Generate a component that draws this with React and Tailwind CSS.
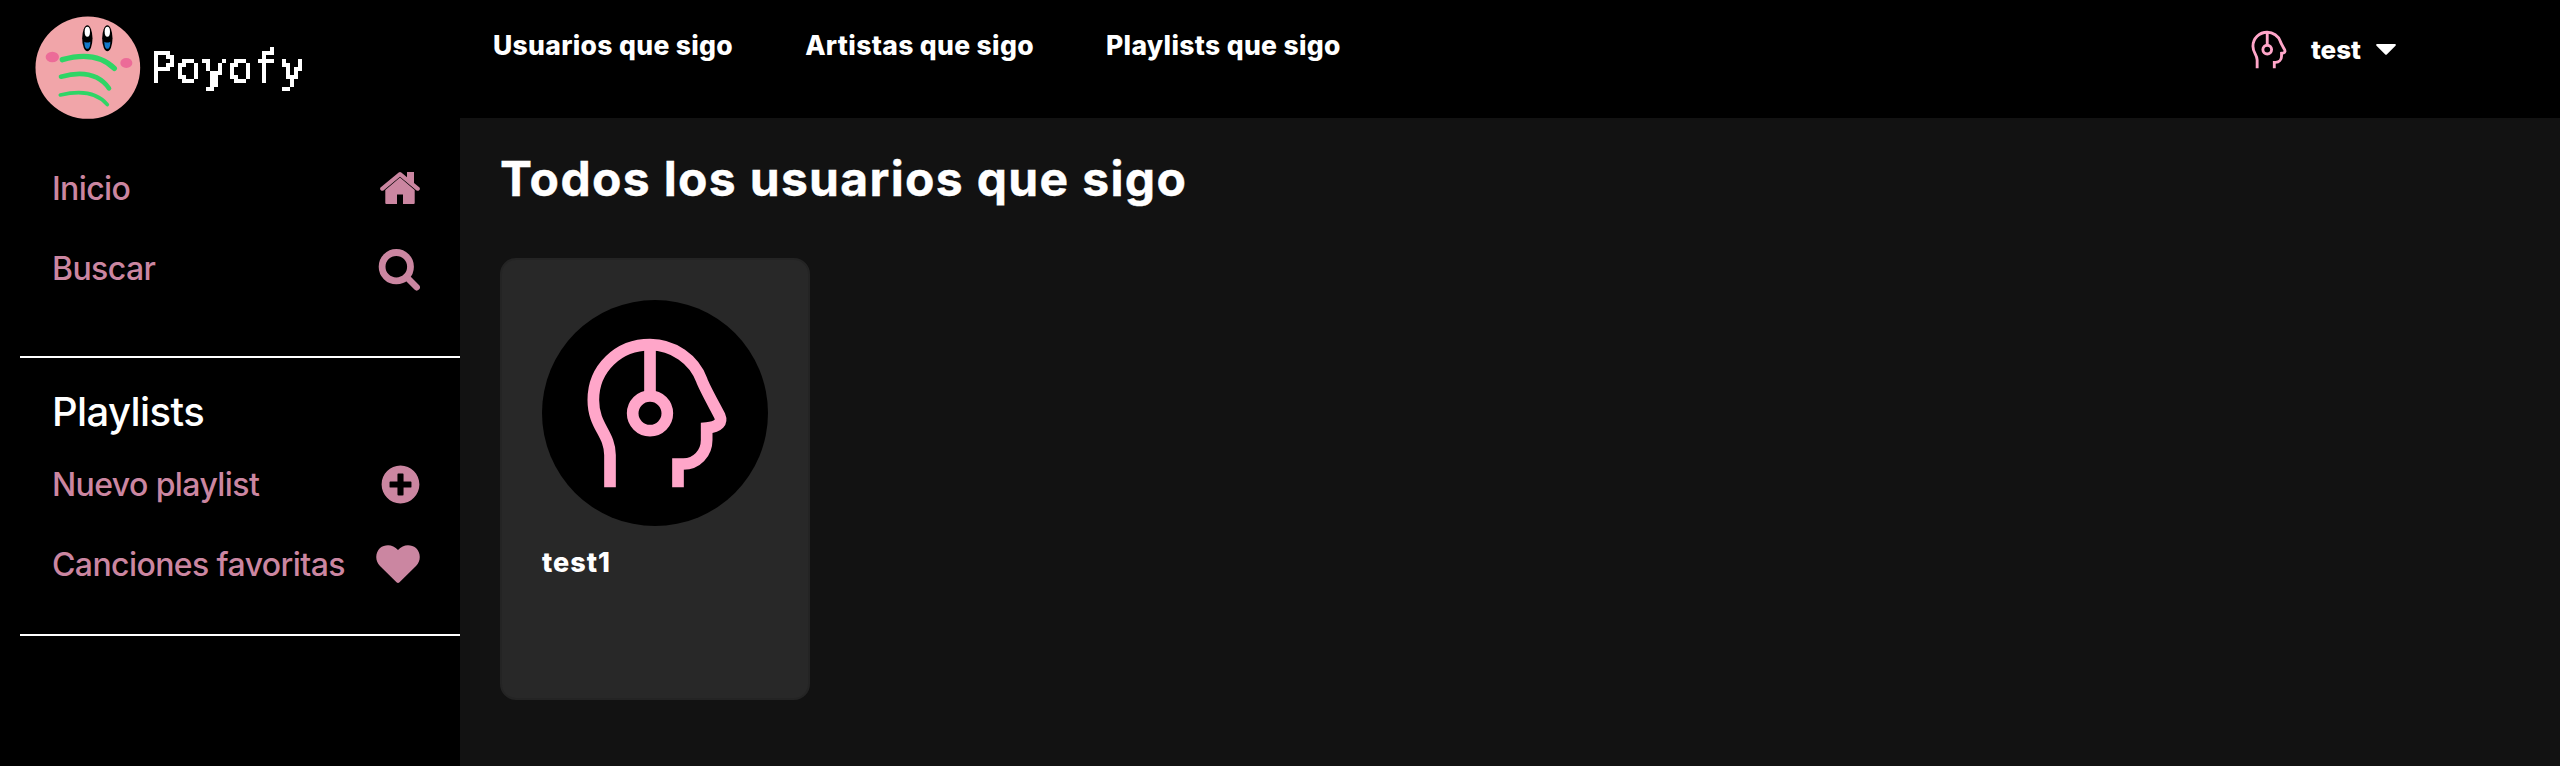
import { FaPlusCircle } from "react-icons/fa";

function Logo() {
  return (
    <svg className="h-[103px] w-[106px] shrink-0" viewBox="107 48 316 309">
      <ellipse cx="264.500" cy="203" rx="157" ry="153.500" fill="#f1a5a9" />
      <ellipse cx="158" cy="171" rx="20" ry="16" fill="#ec6b98" />
      <ellipse cx="380" cy="189" rx="18" ry="15" fill="#ec6b98" />
      <g fill="none" stroke="#2fd566" strokeLinecap="round">
        <path d="M188 179Q288 150 344 205" strokeWidth="16" />
        <path d="M184 230Q284 203 328 265" strokeWidth="14" />
        <path d="M182 285Q280 262 323 314" strokeWidth="11" />
      </g>
      {[263, 323].map((x) => (
        <g key={x}>
          <ellipse cx={x} cy="115" rx="15.500" ry="39" fill="#000" />
          <ellipse cx={x} cy="95" rx="8" ry="15" fill="#fff" />
          <path d={`M${x - 9} 125q9 5 18 0q0 16-6 21h-6q-6-5-6-21`} fill="#1479c9" />
        </g>
      ))}
    </svg>
  );
}

/* Snaps the wordmark to a coarse 4px grid for its 8-bit look. */
function PixelFilter() {
  return (
    <svg className="size-0 shrink-0" aria-hidden="true">
      <filter id="pixelate" x="0" y="0" width="100%" height="100%">
        <feFlood x="2" y="2" width="1" height="1" floodColor="#fff" />
        <feComposite width="4" height="4" />
        <feTile result="grid" />
        <feComposite in="SourceGraphic" in2="grid" operator="in" />
        <feComponentTransfer>
          <feFuncA type="discrete" tableValues="0 1 1" />
        </feComponentTransfer>
        <feConvolveMatrix order="4" kernelMatrix="1 1 1 1 1 1 1 1 1 1 1 1 1 1 1 1" divisor="1" targetX="2" targetY="2" />
      </filter>
    </svg>
  );
}

function HomeIcon() {
  return (
    <svg className="h-8 w-10" viewBox="0 0 40 32" fill="currentColor">
      <path d="M18.700.5Q20 -.3 21.300.5L27 5.200V0H34V11L39.500 15.600Q40.300 16.700 39.400 18Q38 19.400 36.500 18.500L20 4.700L3.500 18.500Q2 19.400.600 18Q-.3 16.700.500 15.600Z" />
      <path d="M20 5.600L34.700 18V31Q34.700 32 33.700 32H23V22.500H17V32H6.300Q5.300 32 5.300 31V18Z" />
    </svg>
  );
}

function SearchIcon() {
  return (
    <svg className="mt-[3px] size-[42px]" viewBox="0 0 42 42" fill="none" stroke="currentColor" strokeLinecap="round">
      <circle cx="18.300" cy="17.700" r="14.200" strokeWidth="6.800" />
      <path d="M30 29.500L38.700 38.300" strokeWidth="6.400" />
    </svg>
  );
}

function HeartIcon() {
  return (
    <svg className="h-[38px] w-11" viewBox="0 0 44 38" fill="currentColor">
      <path d="M22 5C17-1 9-1 4 3C-1 8-1 16 4 21L20.500 37.300Q22 38.600 23.500 37.300L40 21C45 16 45 8 40 3C35-1 27-1 22 5Z" />
    </svg>
  );
}

function Head({ className }) {
  return (
    <svg className={className} viewBox="186 180 678 678" fill="none" stroke="#ffa6c9">
      <path d="M390 742V645C390 580 340 560 340 480C340 385 415 314 510 314C580 314 642 358 665 420C671 438 678 450 719 527C727 546 718 560 680 564V600C680 640 650 672 610 672H594V742" />
      <path d="M510 314V465" />
      <circle cx="510" cy="520" r="52" />
    </svg>
  );
}

function NavRow({ label, children }) {
  return (
    <div className="flex h-20 items-center justify-between pl-8 pr-10 text-[#cb86a1]">
      <span className="pt-px text-[32px] font-medium tracking-[-0.6px]">{label}</span>
      {children}
    </div>
  );
}

export default function App() {
  return (
    <div className="flex h-[766px] w-[2560px] overflow-hidden bg-black font-['Inter',sans-serif] text-white">
      <aside className="flex w-[460px] shrink-0 flex-col pl-5">
        <div className="flex h-[148px] items-start pl-[15px] pt-4">
          <Logo />
          <PixelFilter />
          <span className="ml-2 mt-[26px] font-['DejaVu_Sans_Mono',monospace] text-[43px] leading-[50px] [-webkit-text-stroke:0.8px_white] [filter:url(#pixelate)]">Poyofy</span>
        </div>
        <nav className="flex h-[208px] flex-col">
          <NavRow label="Inicio"><HomeIcon /></NavRow>
          <NavRow label="Buscar"><SearchIcon /></NavRow>
        </nav>
        <section className="flex h-[280px] flex-col border-y-2 border-white pt-[29px]">
          <h2 className="mb-[7px] pl-8 text-[40px] font-medium leading-[50px] tracking-[-0.6px]">Playlists</h2>
          <NavRow label="Nuevo playlist"><FaPlusCircle className="size-[39px]" /></NavRow>
          <NavRow label="Canciones favoritas"><HeartIcon /></NavRow>
        </section>
      </aside>
      <div className="flex flex-1 flex-col">
        <header className="flex h-[118px] items-start justify-between pl-[33px] pr-[164px] text-[26px] font-extrabold">
          <nav className="flex gap-[72px] pt-[25px] text-[26.5px] leading-10 tracking-[0.33px]">
            <span>Usuarios que sigo</span>
            <span>Artistas que sigo</span>
            <span>Playlists que sigo</span>
          </nav>
          <div className="flex items-center pt-[21px] leading-10">
            <Head className="size-[57px] stroke-[34px]" />
            <span className="ml-[14px]">test</span>
            <svg className="ml-[15px] h-[11px] w-5" viewBox="0 0 20 11" fill="currentColor">
              <path d="M1.200 0H18.800Q20.500.3 19.500 1.700L11 10.300Q10 11.300 9 10.300L.5 1.700Q-.5.3 1.200 0Z" />
            </svg>
          </div>
        </header>
        <main className="flex-1 bg-[#121212] px-10 pt-[31px]">
          <h1 className="text-[48px] font-bold leading-[60px] tracking-[1.33px] [-webkit-text-stroke:0.4px_white]">Todos los usuarios que sigo</h1>
          <article className="mt-[49px] h-[442px] w-[310px] rounded-[16px] border-2 border-[#242424] bg-[#282828] px-10 pt-10">
            <div className="size-[226px] rounded-full bg-black"><Head className="size-full stroke-[35px]" /></div>
            <h3 className="mt-[17px] text-[27px] font-extrabold leading-10 tracking-[1px]">test1</h3>
          </article>
        </main>
      </div>
    </div>
  );
}
